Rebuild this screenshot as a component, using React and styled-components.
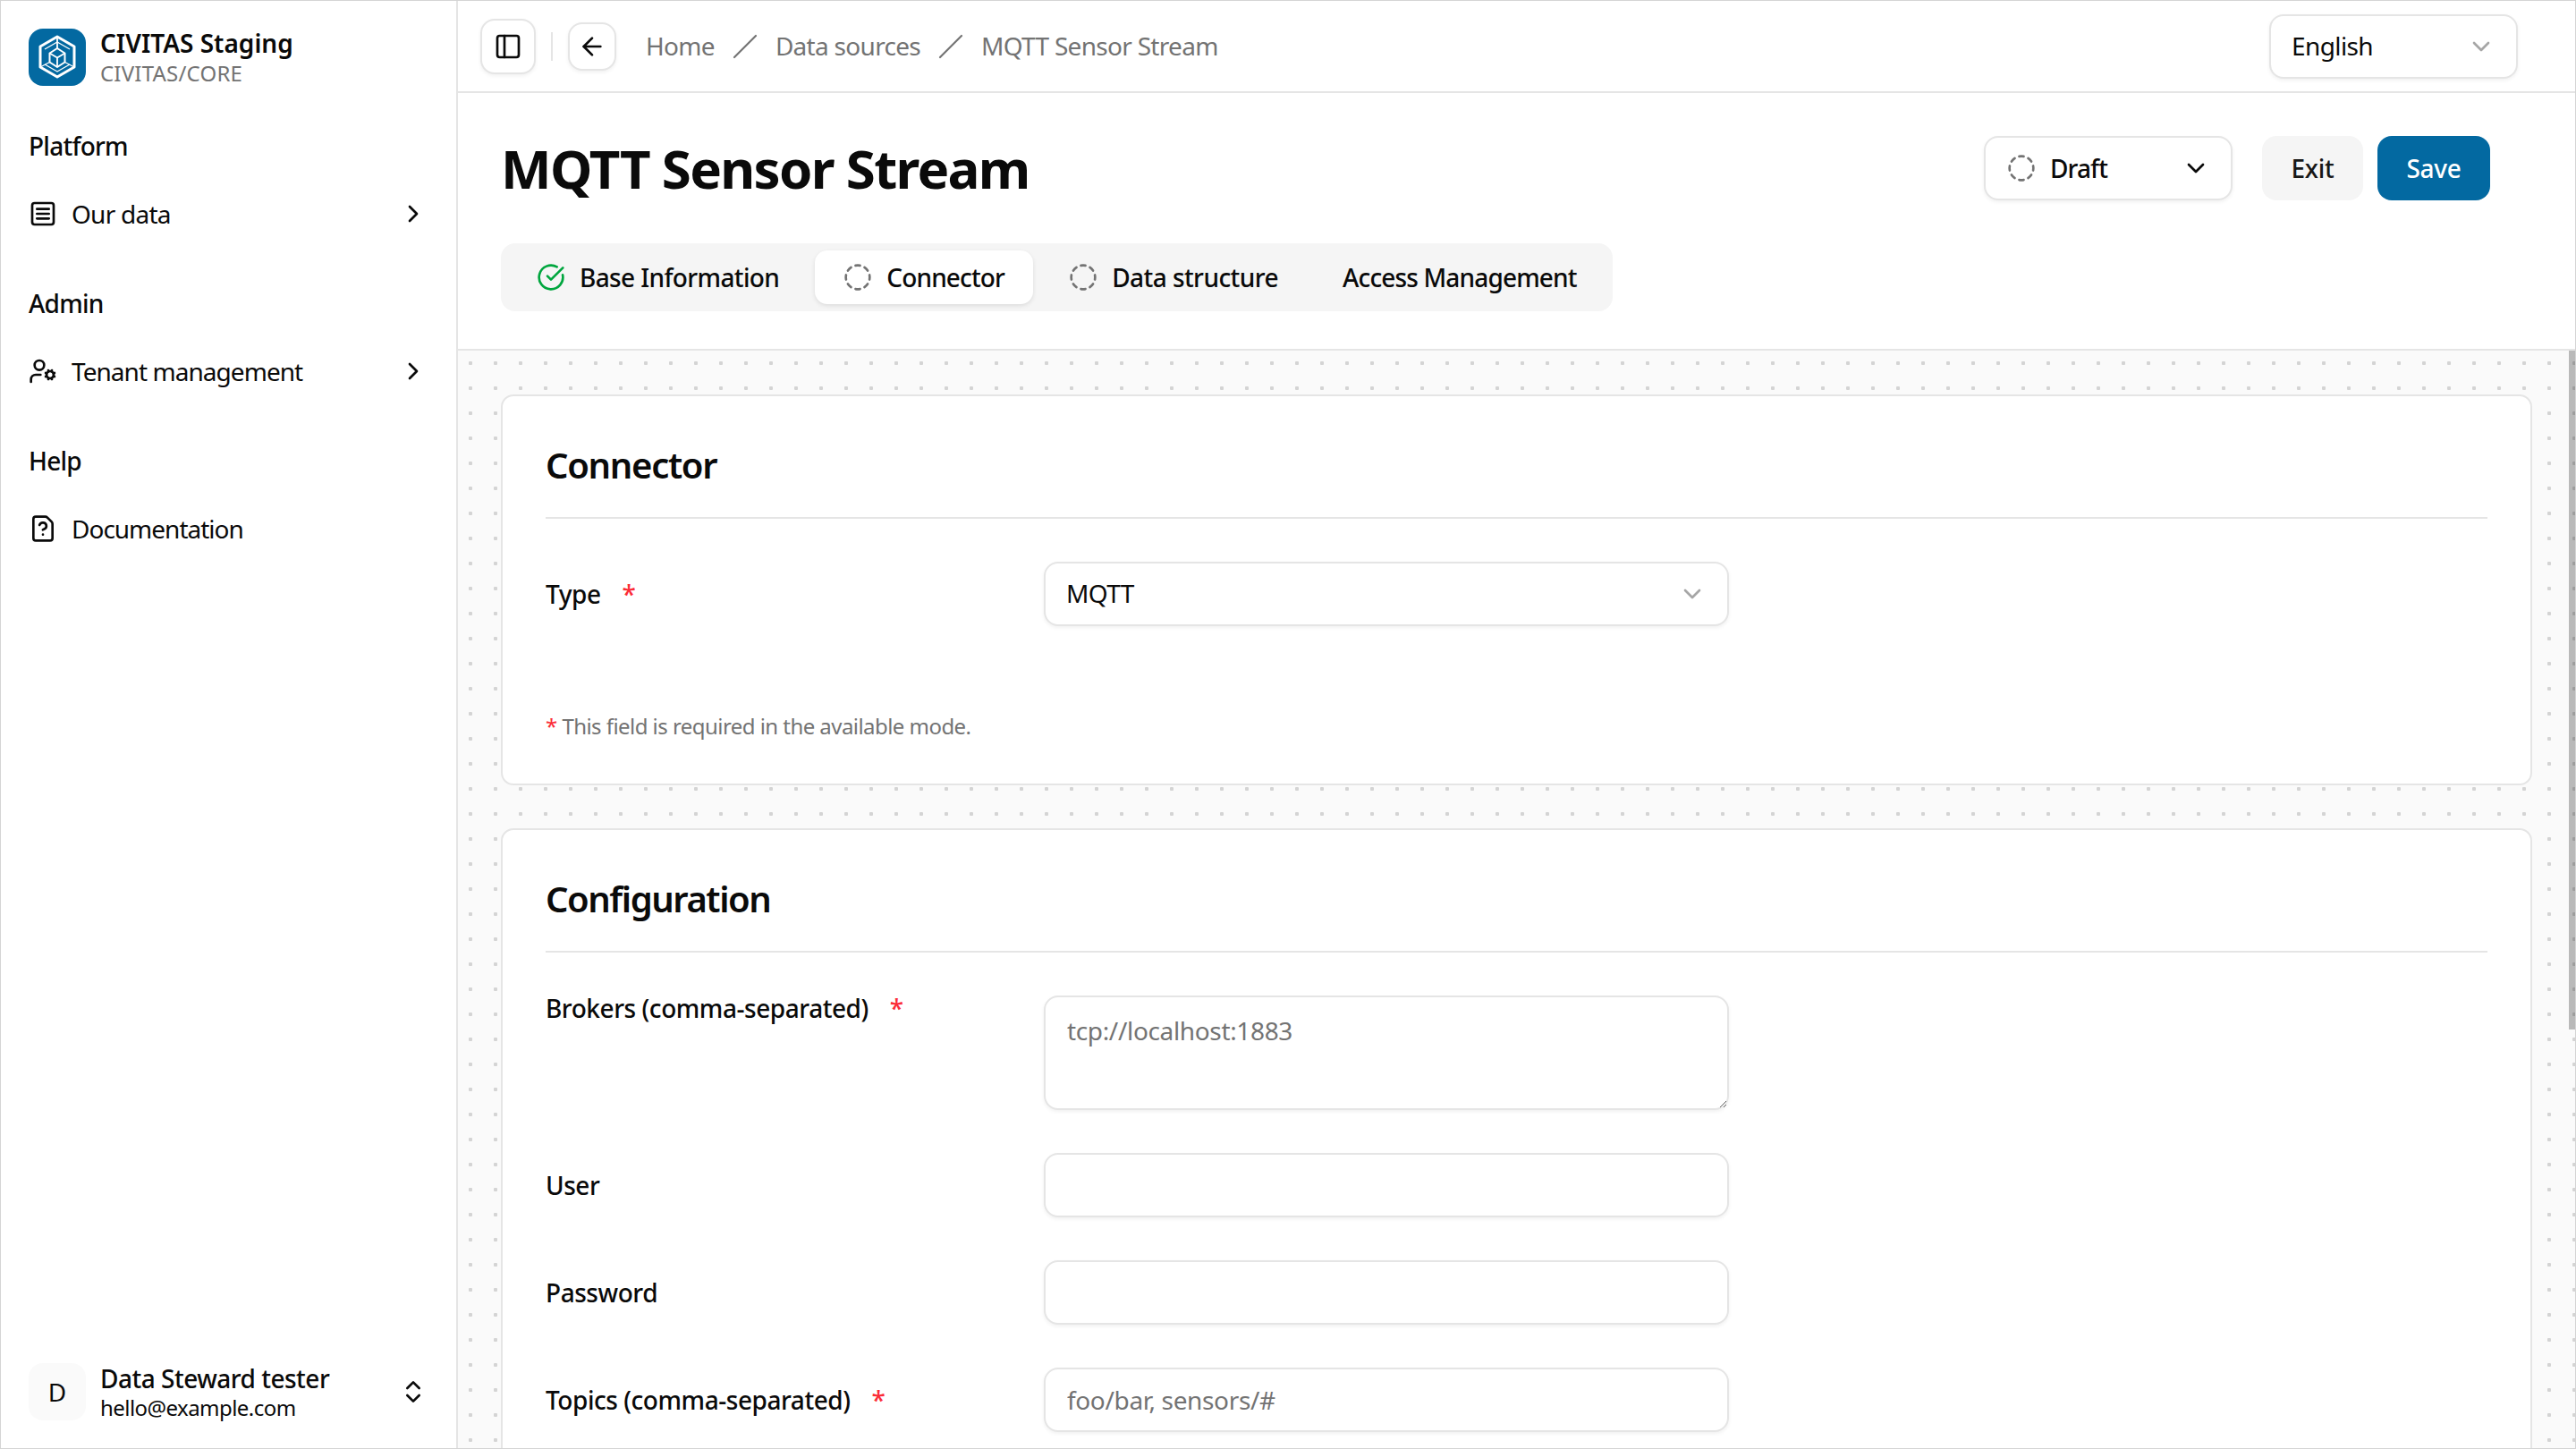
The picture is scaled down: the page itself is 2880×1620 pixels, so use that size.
import React from "react";
import styled, { createGlobalStyle } from "styled-components";
import {
  ArrowLeft, ChevronDown, ChevronRight, ChevronsUpDown, CircleCheckBig, CircleDashed,
  FileQuestion, PanelLeft, SquareMenu, UserCog,
} from "lucide-react";

const Global = createGlobalStyle`
  html, body { margin: 0; padding: 0; height: 100%; background: #fff; }
  * { box-sizing: border-box; }
  body { font-family: "Noto Sans", "Open Sans", sans-serif; color: #0a0a0a; font-size: 28px; }
`;

const Shell = styled.div`
  width: 2880px; height: 1620px; display: flex; overflow: hidden;
  border: 1px solid #d4d4d4; background: #fff;
`;
const Sidebar = styled.aside`
  width: 511px; flex: none; display: flex; flex-direction: column;
  border-right: 2px solid #e5e5e5; padding: 31px 32px 30px 31px;
`;
const Brand = styled.div`display: flex; align-items: center; gap: 16px; height: 64px;`;
const Logo = styled.div`
  width: 64px; height: 64px; border-radius: 16px; background: #0369a1; flex: none;
  display: flex; color: #fff;
`;
const TwoLines = styled.div`display: flex; flex-direction: column; min-width: 0;`;
const BrandName = styled.div`font-size: 28px; font-weight: 600; line-height: 34px; letter-spacing: 0; margin-top: -1px;`;
const BrandSub = styled.div`font-size: 24px; line-height: 30px; color: #737373; letter-spacing: 0.2px; margin-top: 2px;`;
const Group = styled.div`
  display: flex; flex-direction: column; margin-top: ${p => p.$first ? "47px" : "60px"};
`;
const GroupTitle = styled.div`font-size: 28px; font-weight: 500; line-height: 40px; height: 40px; letter-spacing: -0.75px;`;
const MenuItem = styled.div`
  display: flex; align-items: center; gap: 16px; height: 40px; margin-top: 36px; font-size: 28px;
  letter-spacing: ${p => p.$ls || -0.9}px;
  & > svg { flex: none; }
`;
const MenuLabel = styled.span`flex: 1;`;
const Spacer = styled.div`flex: 1;`;
const UserRow = styled.div`display: flex; align-items: center; gap: 16px; height: 66px;`;
const Avatar = styled.div`
  width: 64px; height: 64px; border-radius: 16px; background: #fafafa; flex: none;
  display: flex; align-items: center; justify-content: center; font-size: 28px;
`;
const UserName = styled.div`font-size: 28px; font-weight: 500; line-height: 34px; letter-spacing: -0.5px;`;
const UserMail = styled.div`font-size: 24px; line-height: 30px; letter-spacing: -0.55px; margin-top: 1px;`;
const UserText = styled(TwoLines)`flex: 1;`;

const Main = styled.main`flex: 1; min-width: 0; display: flex; flex-direction: column;`;
const TopBar = styled.header`
  height: 103px; flex: none; display: flex; align-items: center;
  border-bottom: 2px solid #e5e5e5; padding: 0 64px 0 25px;
`;
const IconButton = styled.button`
  width: ${p => p.$size}px; height: ${p => p.$size}px; flex: none; padding: 0; background: #fff;
  border: 2px solid #e5e5e5; border-radius: 16px; box-shadow: 0 2px 4px rgba(0,0,0,.06);
  display: flex; align-items: center; justify-content: center; color: #0a0a0a;
`;
const VDivider = styled.div`width: 2px; height: 32px; background: #e5e5e5; margin: 0 17px;`;
const Crumbs = styled.nav`
  display: flex; align-items: center; gap: 20px; margin-left: 33px; color: #737373; font-size: 28px;
  letter-spacing: -0.7px; flex: 1;
`;
const CrumbText = styled.span`line-height: 36px; padding-bottom: 2px;`;
const SelectBox = styled.div`
  display: flex; align-items: center; justify-content: space-between; background: #fff;
  width: ${p => p.$w}px; height: 72px; flex: none; padding: 0 23px 0 24px;
  border: 2px solid #e5e5e5; border-radius: 16px; box-shadow: 0 2px 4px rgba(0,0,0,.06);
  font-size: 28px; letter-spacing: -0.6px; color: #0a0a0a;
`;
const SelectText = styled.span`line-height: 36px; padding-bottom: 2px; margin-left: -1px;`;
const Head = styled.section`
  height: 288px; flex: none; border-bottom: 2px solid #e5e5e5; padding: 48px 95px 0 48px;
  display: flex; flex-direction: column; gap: 48px;
`;
const TitleRow = styled.div`display: flex; align-items: center; height: 72px;`;
const Title = styled.h1`
  flex: 1; margin: 0; font-size: 60px; font-weight: 700; line-height: 72px; letter-spacing: -1.7px;
`;
const StatusBox = styled(SelectBox)`font-weight: 500; letter-spacing: -0.9px; margin-right: 33px;`;
const StatusLabel = styled.span`display: flex; align-items: center; gap: 16px;`;
const Button = styled.button`
  height: 72px; width: ${p => p.$w}px; border: none; border-radius: 16px; margin-left: ${p => p.$ml}px;
  font: 500 28px "Noto Sans", sans-serif; letter-spacing: -0.3px;
  background: ${p => p.$primary ? "#0369a1" : "#f5f5f5"};
  color: ${p => p.$primary ? "#fff" : "#171717"};
`;
const Tabs = styled.div`
  align-self: flex-start; height: 76px; padding: 8px; background: #f5f5f5; gap: 8px;
  border-radius: 16px; display: flex; align-items: center;
`;
const Tab = styled.div`
  height: 60px; display: flex; align-items: center; gap: 16px; padding: 0 32px; white-space: nowrap;
  border-radius: 14px; font-size: 28px; font-weight: 500; letter-spacing: ${p => p.$ls || -0.85}px;
  background: ${p => p.$active ? "#fff" : "transparent"};
  box-shadow: ${p => p.$active ? "0 2px 5px rgba(0,0,0,.1)" : "none"};
  & > svg { flex: none; }
`;
const Body = styled.div`
  flex: 1; min-height: 0; position: relative; overflow: hidden; padding: 49px 48px 0 48px;
  background-color: #fafafa;
  background-image: radial-gradient(circle at center, #d4d4d4 2px, transparent 2.5px);
  background-size: 28px 28px;
  display: flex; flex-direction: column; gap: 48px;
`;
const ScrollThumb = styled.div`
  position: absolute; top: 0; right: 0; width: 7px; height: 759px; background: rgba(0,0,0,.26);
`;
const Card = styled.section`
  flex: none; background: #fff; border: 2px solid #e5e5e5; border-radius: 14px; padding: 48px;
`;
const CardTitle = styled.h2`
  margin: 0; font-size: 40px; font-weight: 600; line-height: 58px;
  letter-spacing: ${p => p.$ls}px;
  padding-bottom: 29px; border-bottom: 2px solid #e5e5e5;
`;
const Rows = styled.div`display: flex; flex-direction: column; gap: 48px; margin-top: 48px;`;
const Row = styled.div`display: grid; grid-template-columns: 557px 766px;`;
const Label = styled.label`
  font-size: 28px; font-weight: 500; letter-spacing: -0.45px; line-height: 40px;
  margin-top: ${p => p.$top ? "-6px" : "16px"};
`;
const Star = styled.span`color: #fb2c36; margin-left: 24px;`;
const Field = styled.input`
  width: 100%; height: 72px; border: 2px solid #e5e5e5; border-radius: 16px; padding: 0 24px;
  background: #fff; box-shadow: 0 2px 4px rgba(0,0,0,.06); outline: none; display: block;
  font: 28px "Noto Sans", sans-serif; letter-spacing: -0.35px;
  &::placeholder { color: #737373; opacity: 1; }
`;
const Area = styled(Field).attrs({ as: "textarea" })`
  height: 128px; padding: 19px 24px; line-height: 36px;
`;
const Hint = styled.p`
  margin: 96px 0 0; font-size: 24px; line-height: 32px; color: #737373; letter-spacing: -0.55px;
`;
const HintStar = styled.span`color: #fb2c36;`;

const LogoMark = () => (
  <svg width="64" height="64" viewBox="0 0 64 64" fill="none" stroke="currentColor" strokeLinejoin="round">
    <path d="M32 9 51 20v23L32 54 13 43V20z" strokeWidth="3" />
    <path d="M32 22l8.500 5.500v10L32 43l-8.500-5.500v-10z" strokeWidth="2" />
    <path d="M23.500 27.500 32 32.500l8.500-5M32 32.500V43M32 9v13" strokeWidth="1.800" />
    <path d="M13 43l10.500-5.500M51 43l-10.500-5.500M18 40l14 8 14-8M18 23l14-8 14 8" strokeWidth="1.300" />
  </svg>
);
const CrumbSlash = () => (
  <svg width="28" height="28" viewBox="0 0 28 28" fill="none" stroke="#737373" strokeWidth="2.2" strokeLinecap="round">
    <path d="M26 2 2 26" />
  </svg>
);
const Sel = ({ w, children }) => (
  <SelectBox $w={w}><SelectText>{children}</SelectText><ChevronDown size={32} strokeWidth={2} color="#a6a6a6" /></SelectBox>
);

export default function App() {
  return (
    <>
      <Global />
      <Shell>
        <Sidebar>
          <Brand>
            <Logo><LogoMark /></Logo>
            <TwoLines>
              <BrandName>CIVITAS Staging</BrandName>
              <BrandSub>CIVITAS/CORE</BrandSub>
            </TwoLines>
          </Brand>
          <Group $first>
            <GroupTitle>Platform</GroupTitle>
            <MenuItem $ls={-0.75}><SquareMenu size={32} /><MenuLabel>Our data</MenuLabel><ChevronRight size={32} /></MenuItem>
          </Group>
          <Group>
            <GroupTitle>Admin</GroupTitle>
            <MenuItem $ls={-0.95}><UserCog size={32} /><MenuLabel>Tenant management</MenuLabel><ChevronRight size={32} /></MenuItem>
          </Group>
          <Group>
            <GroupTitle>Help</GroupTitle>
            <MenuItem $ls={-1}><FileQuestion size={32} /><MenuLabel>Documentation</MenuLabel></MenuItem>
          </Group>
          <Spacer />
          <UserRow>
            <Avatar>D</Avatar>
            <UserText>
              <UserName>Data Steward tester</UserName>
              <UserMail>hello@example.com</UserMail>
            </UserText>
            <ChevronsUpDown size={32} />
          </UserRow>
        </Sidebar>
        <Main>
          <TopBar>
            <IconButton $size={62}><PanelLeft size={32} /></IconButton>
            <VDivider />
            <IconButton $size={54}><ArrowLeft size={32} /></IconButton>
            <Crumbs>
              <CrumbText>Home</CrumbText><CrumbSlash />
              <CrumbText>Data sources</CrumbText><CrumbSlash />
              <CrumbText>MQTT Sensor Stream</CrumbText>
            </Crumbs>
            <Sel w={278}>English</Sel>
          </TopBar>
          <Head>
            <TitleRow>
              <Title>MQTT Sensor Stream</Title>
              <StatusBox $w={278}>
                <StatusLabel><CircleDashed size={32} color="#737373" />Draft</StatusLabel>
                <ChevronDown size={32} color="#0a0a0a" />
              </StatusBox>
              <Button $w={113} $ml={0}>Exit</Button>
              <Button $w={126} $ml={16} $primary>Save</Button>
            </TitleRow>
            <Tabs>
              <Tab $ls={-0.62}><CircleCheckBig size={32} color="#00a63e" />Base Information</Tab>
              <Tab $active><CircleDashed size={32} color="#737373" />Connector</Tab>
              <Tab $ls={-0.55}><CircleDashed size={32} color="#737373" />Data structure</Tab>
              <Tab>Access Management</Tab>
            </Tabs>
          </Head>
          <Body>
            <Card>
              <CardTitle $ls={-1.3}>Connector</CardTitle>
              <Rows>
                <Row>
                  <Label>Type<Star>*</Star></Label>
                  <Sel w={766}>MQTT</Sel>
                </Row>
              </Rows>
              <Hint><HintStar>*</HintStar> This field is required in the available mode.</Hint>
            </Card>
            <Card>
              <CardTitle $ls={-1.45}>Configuration</CardTitle>
              <Rows>
                <Row>
                  <Label $top>Brokers (comma-separated)<Star>*</Star></Label>
                  <Area placeholder="tcp://localhost:1883" />
                </Row>
                <Row><Label>User</Label><Field /></Row>
                <Row><Label>Password</Label><Field /></Row>
                <Row>
                  <Label>Topics (comma-separated)<Star>*</Star></Label>
                  <Field placeholder="foo/bar, sensors/#" />
                </Row>
              </Rows>
            </Card>
            <ScrollThumb />
          </Body>
        </Main>
      </Shell>
    </>
  );
}
